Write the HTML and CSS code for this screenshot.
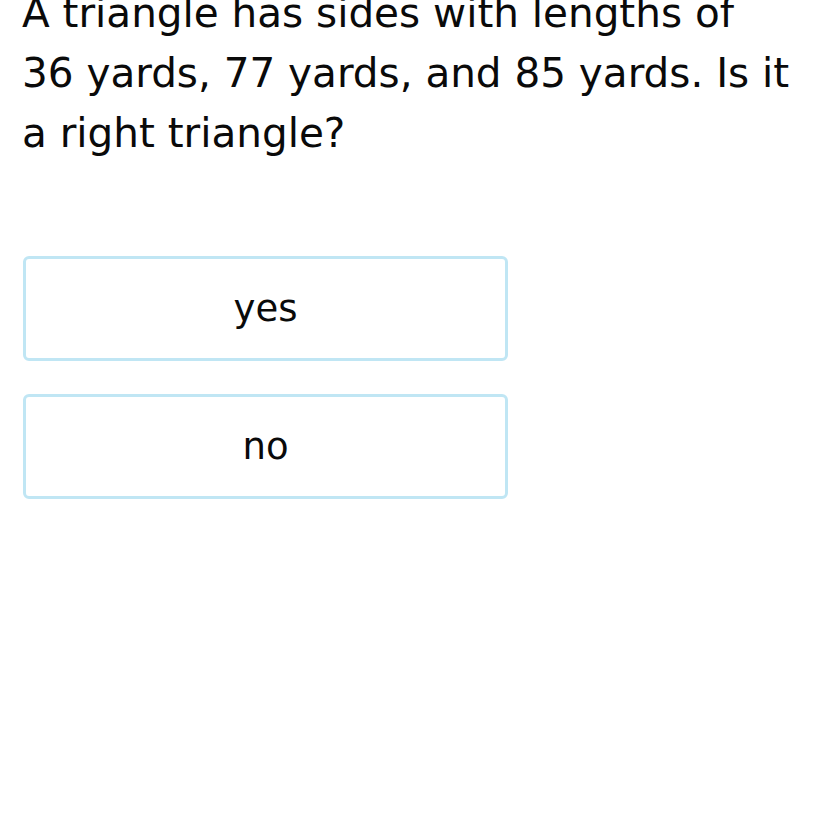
FILE: index.html
```html
<!DOCTYPE html>
<html>
<head>
<meta charset="utf-8">
<link rel="stylesheet" href="styles.css">
</head>
<body>
<div class="question">
  <p class="prompt">A triangle has sides with lengths of<br>36 yards, 77 yards, and 85 yards. Is it<br>a right triangle?</p>
  <div class="choices">
    <div class="choice">yes</div>
    <div class="choice">no</div>
  </div>
</div>
</body>
</html>
```
FILE: styles.css
```css
html, body {
  margin: 0;
  padding: 0;
  background: #fff;
}
body {
  font-family: "DejaVu Sans", Verdana, sans-serif;
  color: #0a0a0a;
}
.question {
  padding-left: 22px;
  width: 800px;
}
.prompt {
  margin: -17px 0 0 0;
  font-size: 40.5px;
  line-height: 60px;
  white-space: nowrap;
}
.choices {
  margin-top: 93px;
  display: flex;
  flex-direction: column;
  gap: 33px;
  width: 485px;
  margin-left: 1px;
}
.choice {
  box-sizing: border-box;
  height: 105px;
  border: 3px solid #c0e6f4;
  border-radius: 6px;
  display: flex;
  align-items: center;
  justify-content: center;
  font-size: 37px;
}
```
